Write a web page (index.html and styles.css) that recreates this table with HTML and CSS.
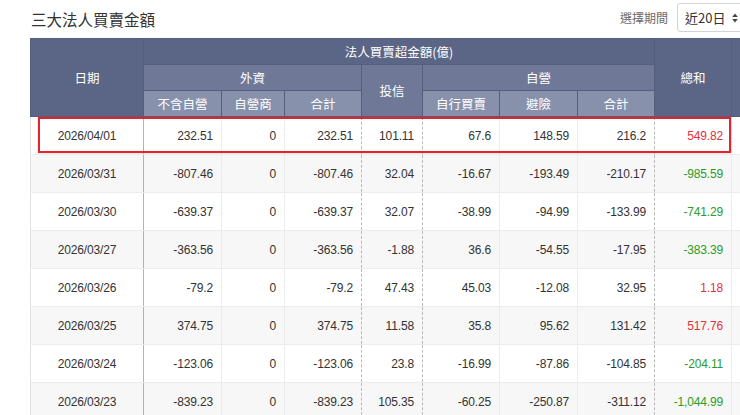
FILE: index.html
```html
<!DOCTYPE html>
<html lang="zh-Hant">
<head>
<meta charset="utf-8">
<title>三大法人買賣金額</title>
<link rel="stylesheet" href="styles.css">
</head>
<body>
<div class="page">
  <div class="topbar">
    <h1 class="title">三大法人買賣金額</h1>
    <div class="period">
      <span class="period-label">選擇期間</span>
      <div class="select">
        <span class="select-text">近20日</span>
        <svg class="select-arrow" width="6" height="10" viewBox="0 0 6 10"><path d="M3 0.5 L5.8 4 L0.2 4 Z M3 9.5 L5.8 6 L0.2 6 Z" fill="#444"/></svg>
      </div>
    </div>
  </div>
  <div class="table-wrap">
    <table class="inst">
      <colgroup>
        <col class="c-date"><col class="c-a"><col class="c-b"><col class="c-c"><col class="c-d"><col class="c-e"><col class="c-f"><col class="c-g"><col class="c-h"><col class="c-x">
      </colgroup>
      <thead>
        <tr>
          <th rowspan="3" class="lv1">日期</th>
          <th colspan="7" class="lv1">法人買賣超金額(億)</th>
          <th rowspan="3" class="lv1">總和</th>
          <th rowspan="3" class="lv1"></th>
        </tr>
        <tr>
          <th colspan="3" class="lv2">外資</th>
          <th rowspan="2" class="lv2">投信</th>
          <th colspan="3" class="lv2">自營</th>
        </tr>
        <tr>
          <th class="lv3">不含自營</th>
          <th class="lv3">自營商</th>
          <th class="lv3">合計</th>
          <th class="lv3">自行買賣</th>
          <th class="lv3">避險</th>
          <th class="lv3">合計</th>
        </tr>
      </thead>
      <tbody>
        <tr><td>2026/04/01</td><td>232.51</td><td>0</td><td>232.51</td><td>101.11</td><td>67.6</td><td>148.59</td><td>216.2</td><td class="up">549.82</td><td></td></tr>
        <tr><td>2026/03/31</td><td>-807.46</td><td>0</td><td>-807.46</td><td>32.04</td><td>-16.67</td><td>-193.49</td><td>-210.17</td><td class="down">-985.59</td><td></td></tr>
        <tr><td>2026/03/30</td><td>-639.37</td><td>0</td><td>-639.37</td><td>32.07</td><td>-38.99</td><td>-94.99</td><td>-133.99</td><td class="down">-741.29</td><td></td></tr>
        <tr><td>2026/03/27</td><td>-363.56</td><td>0</td><td>-363.56</td><td>-1.88</td><td>36.6</td><td>-54.55</td><td>-17.95</td><td class="down">-383.39</td><td></td></tr>
        <tr><td>2026/03/26</td><td>-79.2</td><td>0</td><td>-79.2</td><td>47.43</td><td>45.03</td><td>-12.08</td><td>32.95</td><td class="up">1.18</td><td></td></tr>
        <tr><td>2026/03/25</td><td>374.75</td><td>0</td><td>374.75</td><td>11.58</td><td>35.8</td><td>95.62</td><td>131.42</td><td class="up">517.76</td><td></td></tr>
        <tr><td>2026/03/24</td><td>-123.06</td><td>0</td><td>-123.06</td><td>23.8</td><td>-16.99</td><td>-87.86</td><td>-104.85</td><td class="down">-204.11</td><td></td></tr>
        <tr><td>2026/03/23</td><td>-839.23</td><td>0</td><td>-839.23</td><td>105.35</td><td>-60.25</td><td>-250.87</td><td>-311.12</td><td class="down">-1,044.99</td><td></td></tr>
      </tbody>
    </table>
    <div class="highlight"></div>
  </div>
</div>
</body>
</html>
```
FILE: styles.css
```css
html, body {
  margin: 0;
  padding: 0;
  background: #fff;
}
body {
  font-family: "Liberation Sans", "Noto Sans CJK TC", sans-serif;
  color: #333;
  overflow: hidden;
}
.page {
  width: 740px;
  height: 415px;
  overflow: hidden;
}
.topbar {
  display: flex;
  align-items: flex-start;
  height: 38px;
  padding-left: 31px;
}
.title {
  margin: 11px 0 0;
  font-family: "Noto Sans CJK TC", sans-serif;
  font-size: 15.5px;
  line-height: 17px;
  font-weight: normal;
  color: #333;
}
.period {
  margin-left: auto;
  margin-right: -20px;
  margin-top: 3px;
  display: flex;
  align-items: center;
  gap: 9px;
}
.period-label {
  font-family: "Noto Sans CJK TC", sans-serif;
  font-size: 12px;
  color: #6a6a6a;
}
.select {
  width: 83px;
  height: 29px;
  box-sizing: border-box;
  border: 1px solid #d4d4d4;
  border-radius: 3px;
  display: flex;
  align-items: center;
  gap: 7px;
  padding-left: 7px;
}
.select-text {
  font-family: "Noto Sans CJK TC", sans-serif;
  font-size: 13px;
  color: #333;
}
.select-arrow {
  display: block;
}
.table-wrap {
  position: relative;
  margin-left: 30px;
  width: 760px;
}
.inst {
  border-collapse: collapse;
  table-layout: fixed;
  width: 751px;
}
.c-date { width: 113px; }
.c-a { width: 78px; }
.c-b { width: 63px; }
.c-c { width: 77px; }
.c-d { width: 61px; }
.c-e { width: 77px; }
.c-f { width: 78px; }
.c-g { width: 77px; }
.c-h { width: 77px; }
.c-x { width: 50px; }
.inst th {
  height: 25px;
  padding: 0;
  border: 1px solid #545e7d;
  color: #fff;
  font-family: "Noto Sans CJK TC", sans-serif;
  font-size: 12.5px;
  font-weight: normal;
  text-align: center;
  vertical-align: middle;
}
.inst th.lv1 { background: #5b6585; }
.inst th.lv2 { background: #6f7997; }
.inst th.lv3 { background: #8891ac; }
.inst td {
  height: 37px;
  padding: 0 8px;
  border-right: 1px solid #ececec;
  border-bottom: 1px solid #ececec;
  font-size: 12px;
  letter-spacing: -0.15px;
  text-align: right;
  vertical-align: middle;
  color: #333;
}
.inst tbody tr:nth-child(even) td { background: #f7f7f7; }
.inst td:first-child {
  text-align: center;
  border-left: 1px solid #e2e2e2;
  border-right: 1px solid #a9b2ca;
}
.inst td:nth-child(4),
.inst td:nth-child(5),
.inst td:nth-child(8) {
  border-right: 1px dashed #b9b9b9;
}
.inst td.up { color: #e2323a; }
.inst td.down { color: #2a9c2a; }
.highlight {
  position: absolute;
  left: 8px;
  top: 79px;
  width: 693px;
  height: 36px;
  box-sizing: border-box;
  border: 2px solid #e1252d;
  box-shadow: 0 0 1px rgba(225, 37, 45, 0.6);
  pointer-events: none;
}
```
